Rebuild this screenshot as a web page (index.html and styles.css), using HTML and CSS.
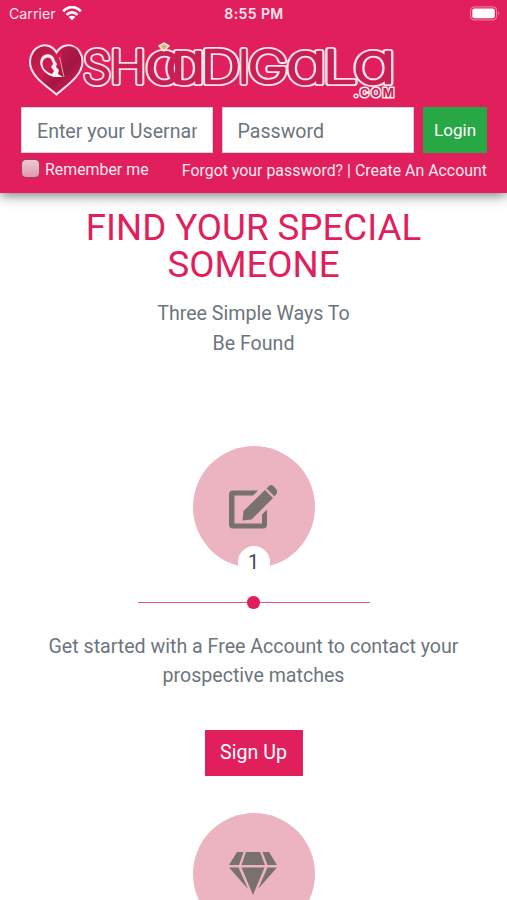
FILE: index.html
```html
<!DOCTYPE html>
<html lang="en">
<head>
<meta charset="utf-8">
<meta name="viewport" content="width=device-width, initial-scale=1">
<title>ShaadiGala</title>
<link rel="stylesheet" href="styles.css">
</head>
<body>
<header class="header">
  <div class="status">
    <div class="carrier"><span>Carrier</span>
      <svg class="wifi" viewBox="0 0 20 15" fill="none" stroke="#fff" stroke-width="2.7"><path d="M1.2 5.3C6-.1 14-.1 18.8 5.3M4.6 8.9c3.1-3.3 7.700-3.300 10.800 0"/><path d="M10 14.300 6.700 11c1.800-1.700 4.800-1.700 6.600 0z" fill="#fff" stroke="none"/></svg>
    </div>
    <span class="time">8:55 PM</span>
    <svg class="battery" viewBox="0 0 31 15"><rect x=".6" y=".9" width="26" height="13" rx="3.500" fill="none" stroke="#f18bad"/><rect x="2.300" y="2.500" width="22.500" height="9.800" rx="2" fill="#fff"/><path d="M28.200 5.300q2 2 0 4z" fill="#f18bad"/></svg>
  </div>
  <svg class="logo" viewBox="0 0 376 64" role="img" aria-label="Shaadigala.com">
    <defs>
      <linearGradient id="heart" x1="0" y1="0" x2="1" y2="1"><stop offset="0" stop-color="#a91843"/><stop offset=".4" stop-color="#ce1c50"/><stop offset=".6" stop-color="#a31742"/><stop offset="1" stop-color="#dd205a"/></linearGradient>
      <g id="word" class="word">
        <text class="cap" x="62" y="47" textLength="28" lengthAdjust="spacingAndGlyphs">S</text>
        <text class="cap" x="89" y="47" textLength="36" lengthAdjust="spacingAndGlyphs">H</text>
        <text class="low" x="124" y="47" textLength="41" lengthAdjust="spacingAndGlyphs">a</text>
        <text class="low" x="144" y="47" textLength="41" lengthAdjust="spacingAndGlyphs">a</text>
        <text class="cap" x="180" y="47" textLength="39" lengthAdjust="spacingAndGlyphs">D</text>
        <text class="cap" x="217" y="47">I</text>
        <text class="cap" x="227" y="47" textLength="40" lengthAdjust="spacingAndGlyphs">G</text>
        <text class="low" x="265" y="47" textLength="41" lengthAdjust="spacingAndGlyphs">a</text>
        <text class="cap" x="302" y="47" textLength="34" lengthAdjust="spacingAndGlyphs">L</text>
        <text class="low" x="332" y="47" textLength="43" lengthAdjust="spacingAndGlyphs">a</text>
      </g>
    </defs>
    <path d="M35.500 58.500C29 52 8.500 41 9 25.500 9.500 10 27 3 35.500 16.500 44 3 61.500 10 61.500 25.500 61.500 41 42 52 35.500 58.500z" fill="url(#heart)" stroke="#ffe5eb" stroke-width="2"/>
    <path d="M40 15c3-5 12-7 17-1 3 8-4 18-14 23z" fill="#a01842" opacity=".6"/>
    <path d="M34 25c-1-7-9-9-13-4-5 7 1 17 12 20h9l-5-3 1-4-3-3 1-3zM31 25l1 3-2 3 3 4-2 3c-7-2-11-8-9-13 2-4 7-5 9 0z" fill="#fff0f2" fill-rule="evenodd"/>
    <path d="m38.500 21 4.500 20" fill="none" stroke="#eda18e"/>
    <use href="#word" stroke="#ffe4eb" stroke-width="6.200" fill="#ffe4eb"/>
    <use href="#word" stroke="#c91f53" stroke-width="2.600" fill="#c91f53"/>
    <path d="m138 10 5-3 5 3-5 5z" fill="#dfb568" stroke="#fff0df" stroke-width="1.500"/>
    <text class="com" x="333" y="60.500" textLength="40" lengthAdjust="spacing">.COM</text>
  </svg>
  <form class="login">
    <input type="text" placeholder="Enter your Username" aria-label="Username">
    <input type="password" placeholder="Password" aria-label="Password">
    <button type="button">Login</button>
  </form>
  <div class="links">
    <label><input type="checkbox"><span>Remember me</span></label>
    <span class="help"><a>Forgot your password?</a> | <a>Create An Account</a></span>
  </div>
</header>
<main>
  <h1>FIND YOUR SPECIAL<br>SOMEONE</h1>
  <p class="sub">Three Simple Ways To<br>Be Found</p>
  <section class="step">
    <div class="circle">
      <svg class="edit" viewBox="0 0 48 44"><path d="M29 5.500H4Q0 5.500 0 9.500V39.500q0 4 4 4H34q4 0 4-4V24.500L33 29.500V38.500H5.500V10.500H24zM13.500 35.500l1-9.500L36 5l8 8L22.500 34.500zM37.500 3.500 40 1q2-2 4.500.300l3 3.200q2.200 2.300.100 4.300L45.500 11.500z"/></svg>
      <span class="num">1</span>
    </div>
    <div class="rule"><i></i></div>
    <p>Get started with a Free Account to contact your<br>prospective matches</p>
    <a class="signup">Sign Up</a>
  </section>
  <section class="step second">
    <div class="circle">
      <svg class="diamond" viewBox="0 0 48 43"><path d="M8 0h6.500L10 13H0zM17 0h14l5 13H12.500zM33.500 0H40l8 13h-9.500zM0 15.500h9.500L19 37zM12.500 15.500h23L24 43zM38.500 15.500H48L29 37z"/></svg>
    </div>
  </section>
</main>
</body>
</html>
```
FILE: styles.css
```css
* { box-sizing: border-box; }
body { margin: 0; height: 900px; overflow: hidden; background: #fff; color: #6c757d; font-family: Roboto, sans-serif; font-size: 19.6px; }
.header { height: 193px; padding: 0 20px 0 21px; background: #e01f5c; color: #fff; box-shadow: 0 2px 12px rgba(0,0,0,.55); }
.status { height: 28px; margin: 0 -12px; display: grid; grid-template-columns: 1fr auto 1fr; align-items: center; font: 14.2px Inter, sans-serif; color: #ffe6ee; }
.carrier { display: flex; align-items: center; gap: 6px; margin-top: -1px; }
.wifi { width: 20px; height: 15px; }
.time { font-weight: 600; font-size: 14px; letter-spacing: .4px; margin-top: -2px; }
.battery { width: 31px; height: 15px; justify-self: end; margin: -2px -2px 0 0; }
.logo { display: block; width: 376px; height: 64px; margin-top: 8px; overflow: visible; }
.word { font-family: Inter, sans-serif; font-weight: 200; stroke-linejoin: round; }
.cap { font-size: 45px; }
.low { font-size: 57px; font-feature-settings: "cv11"; }
.com { font: 700 12px Inter, sans-serif; fill: #cb1f53; stroke: #ffe4eb; stroke-width: 3px; paint-order: stroke; }
.login { display: flex; height: 46px; margin-top: 7px; }
.login input { width: 192px; height: 46px; margin: 0 8.5px 0 0; padding: 2px 15px 0; border: 1px solid #ced4da; border-radius: 0; background: #fff; font: 19.6px Roboto, sans-serif; }
.login input::placeholder { color: #6c757d; opacity: 1; }
.login button { width: 64px; height: 46px; margin-left: 1px; padding: 0; border: 0; background: #28a745; color: #fff; font: 17.1px Roboto, sans-serif; }
.links { height: 32px; display: flex; justify-content: space-between; font-size: 15.9px; color: #ffe9ef; }
.links label { display: flex; align-items: center; gap: 5px; height: 32px; }
.links input { appearance: none; width: 19px; height: 19px; margin: 0 0 1px; border: 1px solid #8c4860; border-radius: 5px; background: linear-gradient(#f1c7d2, #dc9aae); }
.help { line-height: 35px; white-space: nowrap; }
h1 { margin: 17px 0 0; color: #e01f5c; font-size: 36.7px; line-height: 36.7px; font-weight: 400; text-align: center; }
.sub { margin: 16px 0 0; line-height: 29.2px; text-align: center; }
.step { display: flex; flex-direction: column; align-items: center; margin-top: 88px; }
.circle { position: relative; flex: none; width: 122px; height: 122px; border-radius: 50%; background: #ebb4c0; display: flex; justify-content: center; fill: #78716f; }
.edit { width: 48px; height: 44px; margin: 39px 1px 0 0; }
.num { position: absolute; left: 45px; top: 100px; width: 32px; height: 32px; border-radius: 50%; background: #fff; color: #444; line-height: 33px; text-align: center; }
.rule { width: 232px; height: 1.2px; margin-top: 34px; background: #e65380; display: flex; justify-content: center; align-items: center; }
.rule i { flex: none; width: 12.5px; height: 12.5px; border-radius: 50%; background: #e01f5c; }
.step p { margin: 29px 0 0; line-height: 29.4px; text-align: center; white-space: nowrap; }
.signup { width: 98px; height: 46px; margin-top: 39px; background: #e01f5c; color: #fff; line-height: 46px; text-align: center; }
.second { margin-top: 37px; }
.diamond { width: 48px; height: 43px; margin: 39px 1px 0 0; }
```
